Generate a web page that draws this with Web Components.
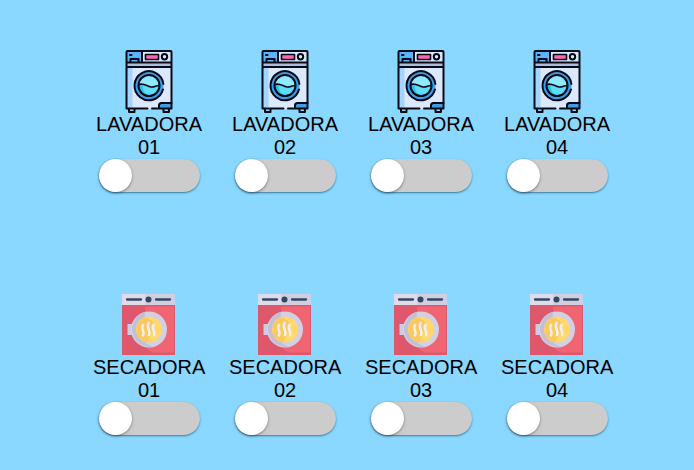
<!DOCTYPE html>
<html lang="es">
<head>
<meta charset="utf-8">
<title>Lavandería</title>
<style>
  body { margin: 0; min-height: 100vh; background: #8ad8ff; color: #000; font: 20px/23px "Liberation Sans", Arial, sans-serif; }
</style>
</head>
<body>
<template id="washer-icon">
  <style>:host { display: block; width: 64px; height: 64px; } svg { display: block; width: 100%; height: 100%; }</style>
  <svg viewBox="0 0 64 64" aria-hidden="true">
    <rect x="9.5" y="14" width="45" height="46" fill="#dbe8fd"/>
    <rect x="9.5" y="14" width="6" height="46" fill="#a5d4ff"/>
    <rect x="9.5" y="14" width="45" height="4" fill="#a9bfe0"/>
    <rect x="9.5" y="2" width="45" height="11.5" rx="1" fill="#dbe8fd"/>
    <path d="M9.5 2h15.500v11.500H9.500z" fill="#5db3f8"/>
    <circle cx="32" cy="36.500" r="14.500" fill="#429be8"/>
    <circle cx="32" cy="36.500" r="10.500" fill="#8eeaff"/>
    <path d="M21.500 36.500c5-3 9 1.500 13 1.500s5-1.500 8-1.500a10.500 10.500 0 0 1-21 0z" fill="#5edcf9"/>
    <path d="M21.500 36.500q2-1.300 4-1c0 5 2 9 6 11.500a10.500 10.500 0 0 1-10-10.500z" fill="#28c4f2"/>
    <path d="M42 59.500v-3q0-2.500 2.500-2.500h10v6z" fill="#429be8"/>
    <g fill="none" stroke="#080b14" stroke-width="2" stroke-linecap="round" stroke-linejoin="round">
      <path d="M30.500 59.500H9.500V3q0-1 1-1h43q1 0 1 1v56.500H35M9.500 13.500h45M9.500 18h45M25 2v11.500M13.500 13v-3h8v3M13 6h1.500"/>
      <path d="M12 60v3h5.500V60M46.500 60v3H52V60M42 59v-2.500q0-2.500 2.500-2.500h10"/>
      <path d="M46.400 35A14.500 14.500 0 1 0 46 40.500"/>
      <circle cx="32" cy="36.500" r="10.500"/>
      <path d="M22 35.500c5-2 8.500 2.500 12.500 2.500s4-1.500 7.500-1.500" stroke-width="1.600"/>
      <rect x="28.500" y="5.500" width="13" height="5" fill="#ff65b7" stroke-width="1.600"/>
      <circle cx="47.500" cy="7.800" r="2.700"/>
    </g>
  </svg>
</template>

<template id="dryer-icon">
  <style>:host { display: block; width: 64px; height: 64px; } svg { display: block; width: 100%; height: 100%; }</style>
  <svg viewBox="0 0 64 64" aria-hidden="true">
    <path d="M5 13h53v50H5z" fill="#dc586a"/>
    <path d="M28 14.500h29v46H37q-9-2-9-9z" fill="#f16472"/>
    <path d="M5 2h53v11H5z" fill="#d0cee2"/>
    <path d="M5 2h23v11H5z" fill="#dedbec"/>
    <path d="M10 7.500H24M39 7.500h14" stroke="#324a5e" stroke-width="2.300" stroke-linecap="round"/>
    <circle cx="31.500" cy="7.500" r="3" fill="#324a5e"/>
    <path d="M10.500 32h6v11h-6z" fill="#cfcbe0"/>
    <circle cx="32" cy="37.500" r="18" fill="#d3d0e4"/>
    <path d="M28 20a18 18 0 0 0 8 35q-8-3-10-8z" fill="#c3bfd7"/>
    <circle cx="32" cy="37.500" r="13" fill="#ffd86e"/>
    <path d="M28 25.200q8 2 8 8t-6 17a13 13 0 0 1-2-25z" fill="#fbc95f"/>
    <path d="M26 33c-3 5 2.500 5.500 0 10.500M31.500 31c-3 5.500 3 6.500 .5 12M36.500 33c-3 5 3 5.500 .5 10.500" fill="none" stroke="#f3eef0" stroke-width="2.500" stroke-linecap="round"/>
  </svg>
</template>

<template id="toggle-switch">
  <style>
    :host { display: block; width: 101px; height: 33px; }
    input { appearance: none; display: flex; box-sizing: border-box; width: 100%; height: 100%; margin: 0; border-radius: 17px; background: #ccc; box-shadow: 0 1px 2px rgba(0,60,90,.6); cursor: pointer; }
    input::before { content: ""; height: 100%; aspect-ratio: 1; border-radius: 50%; background: #fff; box-shadow: 0 1px 3px rgba(0,0,0,.4); }
    input:checked { background: #4caf50; justify-content: flex-end; }
  </style>
  <input type="checkbox" role="switch">
</template>

<template id="machine-card">
  <style>
    :host { display: flex; flex-direction: column; align-items: center; }
    .name { width: 112px; text-align: center; }
  </style>
  <slot name="icon"></slot>
  <span class="name"><slot></slot></span>
  <toggle-switch></toggle-switch>
</template>

<template id="laundry-panel">
  <style>
    :host { display: grid; grid-template-columns: repeat(4, 1fr); row-gap: 100px; padding: 49px 69px 34px 81px; }
  </style>
</template>

<laundry-panel></laundry-panel>

<script>
class TemplateElement extends HTMLElement {
  constructor() {
    super();
    const content = document.getElementById(this.localName).content;
    this.attachShadow({ mode: "open" }).append(document.importNode(content, true));
  }
}
customElements.define("washer-icon", class extends TemplateElement {});
customElements.define("dryer-icon", class extends TemplateElement {});
customElements.define("toggle-switch", class extends TemplateElement {
  static observedAttributes = ["label"];
  attributeChangedCallback(name, before, value) {
    this.shadowRoot.querySelector("input").setAttribute("aria-label", value);
  }
});
customElements.define("machine-card", class extends TemplateElement {
  connectedCallback() {
    this.shadowRoot.querySelector("toggle-switch").setAttribute("label", this.textContent.trim());
  }
});
customElements.define("laundry-panel", class extends TemplateElement {
  connectedCallback() {
    for (const [name, icon] of [["LAVADORA", "washer-icon"], ["SECADORA", "dryer-icon"]]) {
      for (const number of ["01", "02", "03", "04"]) {
        const card = document.createElement("machine-card");
        const picture = document.createElement(icon);
        picture.slot = "icon";
        card.append(picture, `${name} ${number}`);
        this.shadowRoot.append(card);
      }
    }
  }
});
</script>
</body>
</html>
